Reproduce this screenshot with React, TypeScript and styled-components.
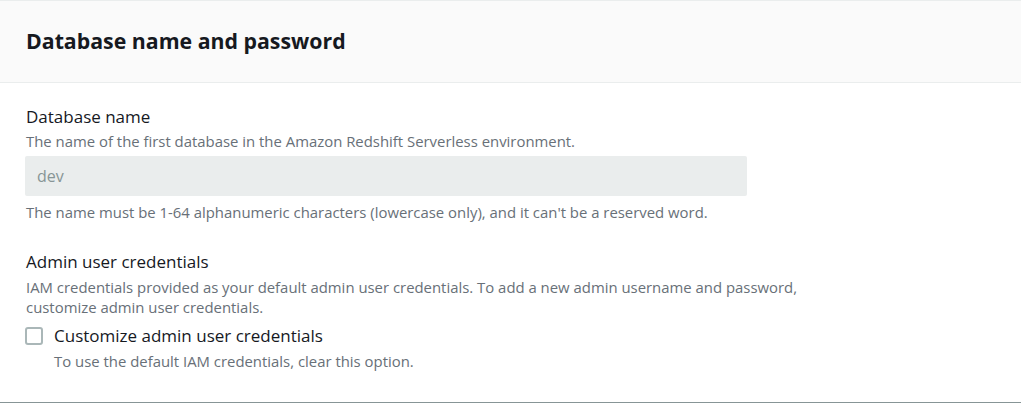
import styled, { createGlobalStyle } from 'styled-components'

const GlobalStyle = createGlobalStyle`
  html, body {
    margin: 0;
    padding: 0;
    background: #ffffff;
  }
  body {
    font-family: "Open Sans", "Noto Sans", sans-serif;
    color: #16191f;
  }
`

const Panel = styled.section`
  width: 1021px;
  border-top: 1px solid #eaeded;
  border-bottom: 1px solid #879596;
  background: #ffffff;
`

const Header = styled.header`
  height: 82px;
  box-sizing: border-box;
  padding: 0 26px 2px;
  display: flex;
  align-items: center;
  background: #fafafa;
  border-bottom: 1px solid #eaeded;
`

const Title = styled.h2`
  margin: 0;
  font-size: 21.3px;
  font-weight: 700;
  line-height: 26px;
  color: #16191f;
`

const Body = styled.div`
  padding: 23px 26px 31px;
  display: flex;
  flex-direction: column;
  gap: 29px;
`

const Field = styled.div`
  display: flex;
  flex-direction: column;
`

const Label = styled.label`
  font-size: 17px;
  line-height: 22px;
  color: #16191f;
`

const Description = styled.p<{ $width?: number; $gap?: number }>`
  margin: ${({ $gap = 3 }) => `${$gap}px 0 0`};
  font-size: 14.9px;
  line-height: 20px;
  color: #687078;
  max-width: ${({ $width }) => ($width ? `${$width}px` : 'none')};
`

const Constraint = styled(Description)`
  margin-top: 6px;
`

const Input = styled.input`
  margin: 5px 0 0 -1px;
  width: 722px;
  height: 40px;
  box-sizing: border-box;
  padding: 0 12px;
  border: none;
  border-radius: 2px;
  background: #eaeded;
  font-family: inherit;
  font-size: 16px;
  color: #879596;
`

const CheckRow = styled.label`
  margin-top: 8px;
  display: grid;
  grid-template-columns: 18px 1fr;
  column-gap: 10px;
  align-items: center;
  cursor: pointer;
`

const Box = styled.span`
  width: 18px;
  height: 18px;
  box-sizing: border-box;
  margin-left: -1px;
  border: 2px solid #aab7b8;
  border-radius: 3px;
  background: #ffffff;
`

const CheckText = styled.span`
  font-size: 17px;
  line-height: 22px;
  color: #16191f;
`

const CheckHint = styled(Description)`
  grid-column: 2;
  margin-top: 4px;
`

export default function App() {
  return (
    <>
      <GlobalStyle />
      <Panel>
        <Header>
          <Title>Database name and password</Title>
        </Header>
        <Body>
          <Field>
            <Label>Database name</Label>
            <Description>
              The name of the first database in the Amazon Redshift Serverless environment.
            </Description>
            <Input value="dev" disabled readOnly />
            <Constraint>
              The name must be 1-64 alphanumeric characters (lowercase only), and it can't be a
              reserved word.
            </Constraint>
          </Field>
          <Field>
            <Label>Admin user credentials</Label>
            <Description $width={790} $gap={4}>
              IAM credentials provided as your default admin user credentials. To add a new admin
              username and password, customize admin user credentials.
            </Description>
            <CheckRow>
              <Box />
              <CheckText>Customize admin user credentials</CheckText>
              <CheckHint>To use the default IAM credentials, clear this option.</CheckHint>
            </CheckRow>
          </Field>
        </Body>
      </Panel>
    </>
  )
}
